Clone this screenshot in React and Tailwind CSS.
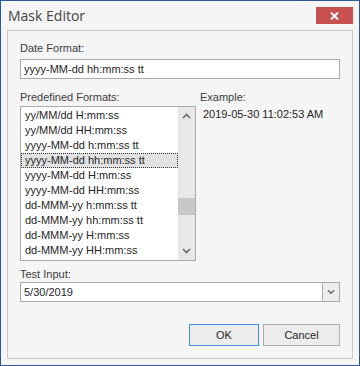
// Mask Editor dialog — Office-2013 style WinForms look
const formats = [
  "yy/MM/dd H:mm:ss",
  "yy/MM/dd HH:mm:ss",
  "yyyy-MM-dd h:mm:ss tt",
  "yyyy-MM-dd hh:mm:ss tt",
  "yyyy-MM-dd H:mm:ss",
  "yyyy-MM-dd HH:mm:ss",
  "dd-MMM-yy h:mm:ss tt",
  "dd-MMM-yy hh:mm:ss tt",
  "dd-MMM-yy H:mm:ss",
  "dd-MMM-yy HH:mm:ss",
];

const selected = 3;

function Chevron({ up, className }) {
  return (
    <svg width="9" height="6" viewBox="0 0 9 6" className={className}>
      <path
        d={up ? "M1 5 L4.5 1.5 L8 5" : "M1 1 L4.5 4.5 L8 1"}
        fill="none"
        stroke="#6b6b6b"
        strokeWidth="1.6"
      />
    </svg>
  );
}

export default function App() {
  return (
    <div
      className="w-[360px] h-[366px] border border-[#2b5797] bg-[#f5f5f5] text-[11px] leading-[14px] text-[#262626]"
      style={{ fontFamily: '"Liberation Sans", Arial, sans-serif' }}
    >
      {/* title bar */}
      <div className="h-[29px] flex items-start justify-between">
        <div
          className="pl-[7px] pt-[6px] text-[14px] leading-[18px] text-[#444]"
          style={{ fontFamily: '"Open Sans", "Noto Sans", sans-serif' }}
        >
          Mask Editor
        </div>
        <div className="mt-[6px] mr-[6px] w-[37px] h-[17px] bg-[#c75050] flex items-center justify-center">
          <svg width="9" height="8" viewBox="0 0 9 8">
            <path d="M1 0.5 L8 7.5 M8 0.5 L1 7.5" stroke="#fff" strokeWidth="2" />
          </svg>
        </div>
      </div>

      {/* content panel */}
      <div className="mx-[6px] h-[329px] border border-[#c9c9c9] px-[12px] pt-[10px]">
        <div className="text-[#3c3c3c]">Date Format:</div>
        <div className="mt-[4px] h-[20px] border border-[#ababab] bg-white flex items-center pl-[3px]">
          yyyy-MM-dd hh:mm:ss tt
        </div>

        <div className="mt-[11px] flex">
          <div className="w-[176px]">
            <div className="text-[#3c3c3c]">Predefined Formats:</div>
            <div className="mt-[2px] h-[155px] border border-[#ababab] bg-white flex">
              <div className="flex-1 pt-[1px]">
                {formats.map((f, i) => (
                  <div
                    key={f}
                    className={
                      i === selected
                        ? "h-[15px] leading-[13px] pl-[3px] bg-[#e2e2e2] border border-dotted border-[#333]"
                        : "h-[15px] leading-[15px] pl-[4px]"
                    }
                  >
                    {f}
                  </div>
                ))}
              </div>
              <div className="w-[17px] bg-[#e8e8e8] flex flex-col items-center">
                <div className="h-[17px] flex items-center justify-center">
                  <Chevron up />
                </div>
                <div className="mt-[74px] h-[17px] w-full bg-[#c8c8c8]" />
                <div className="mt-auto h-[19px] flex items-center justify-center">
                  <Chevron />
                </div>
              </div>
            </div>
          </div>

          <div className="ml-[4px]">
            <div className="text-[#3c3c3c]">Example:</div>
            <div className="mt-[3px] pl-[3px]">2019-05-30 11:02:53 AM</div>
          </div>
        </div>

        <div className="mt-[6px] text-[#3c3c3c]">Test Input:</div>
        <div className="mt-[1px] h-[20px] border border-[#ababab] bg-white flex">
          <div className="flex-1 flex items-center pl-[3px]">5/30/2019</div>
          <div className="w-[17px] border-l border-[#ababab] bg-[#eeeeee] flex items-center justify-center">
            <Chevron className="w-[8px]" />
          </div>
        </div>

        <div className="mt-[22px] flex justify-end gap-[4px]">
          <button className="w-[70px] h-[22px] border border-[#3b8fe6] bg-[#ececec] text-[#262626]">
            OK
          </button>
          <button className="w-[77px] h-[22px] border border-[#adadad] bg-[#ececec] text-[#262626]">
            Cancel
          </button>
        </div>
      </div>
    </div>
  );
}
